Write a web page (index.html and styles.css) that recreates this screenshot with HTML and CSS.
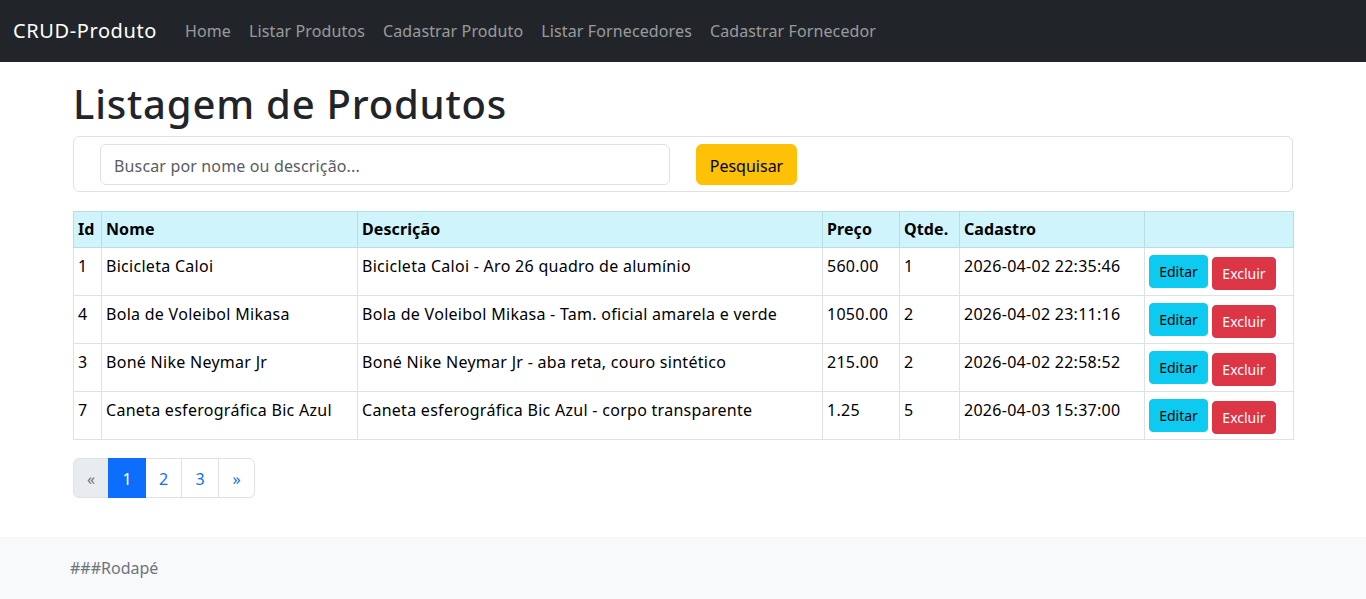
FILE: index.html
```html
<!DOCTYPE html>
<html lang="pt-br">
<head>
<meta charset="utf-8">
<title>CRUD-Produto</title>
<link rel="stylesheet" href="styles.css">
</head>
<body>
<nav class="navbar">
  <a class="brand" href="#">CRUD-Produto</a>
  <ul class="nav">
    <li><a href="#">Home</a></li>
    <li><a href="#">Listar Produtos</a></li>
    <li><a href="#">Cadastrar Produto</a></li>
    <li><a href="#">Listar Fornecedores</a></li>
    <li><a href="#">Cadastrar Fornecedor</a></li>
  </ul>
</nav>
<main class="container">
  <h1 class="title">Listagem de Produtos</h1>
  <form class="search-card">
    <input class="search-input" type="text" placeholder="Buscar por nome ou descrição...">
    <button class="btn btn-warning" type="button">Pesquisar</button>
  </form>
  <table class="table">
    <colgroup>
      <col class="c-id"><col class="c-nome"><col class="c-desc"><col class="c-preco"><col class="c-qtde"><col class="c-cad"><col class="c-acoes">
    </colgroup>
    <thead>
      <tr><th>Id</th><th>Nome</th><th>Descrição</th><th>Preço</th><th>Qtde.</th><th>Cadastro</th><th></th></tr>
    </thead>
    <tbody>
      <tr><td>1</td><td>Bicicleta Caloi</td><td>Bicicleta Caloi - Aro 26 quadro de alumínio</td><td>560.00</td><td>1</td><td>2026-04-02 22:35:46</td><td class="acoes"><a class="btn-sm btn-info" href="#">Editar</a><button class="btn-sm btn-danger" type="button">Excluir</button></td></tr>
      <tr><td>4</td><td>Bola de Voleibol Mikasa</td><td>Bola de Voleibol Mikasa - Tam. oficial amarela e verde</td><td>1050.00</td><td>2</td><td>2026-04-02 23:11:16</td><td class="acoes"><a class="btn-sm btn-info" href="#">Editar</a><button class="btn-sm btn-danger" type="button">Excluir</button></td></tr>
      <tr><td>3</td><td>Boné Nike Neymar Jr</td><td>Boné Nike Neymar Jr - aba reta, couro sintético</td><td>215.00</td><td>2</td><td>2026-04-02 22:58:52</td><td class="acoes"><a class="btn-sm btn-info" href="#">Editar</a><button class="btn-sm btn-danger" type="button">Excluir</button></td></tr>
      <tr><td>7</td><td>Caneta esferográfica Bic Azul</td><td>Caneta esferográfica Bic Azul - corpo transparente</td><td>1.25</td><td>5</td><td>2026-04-03 15:37:00</td><td class="acoes"><a class="btn-sm btn-info" href="#">Editar</a><button class="btn-sm btn-danger" type="button">Excluir</button></td></tr>
    </tbody>
  </table>
  <ul class="pagination">
    <li class="page-item disabled"><span>«</span></li>
    <li class="page-item active"><span>1</span></li>
    <li class="page-item"><a href="#">2</a></li>
    <li class="page-item"><a href="#">3</a></li>
    <li class="page-item"><a href="#">»</a></li>
  </ul>
</main>
<footer class="footer">###Rodapé</footer>
</body>
</html>
```
FILE: styles.css
```css
* { box-sizing: border-box; }
html, body { margin: 0; padding: 0; }
body {
  font-family: "Noto Sans", "Open Sans", sans-serif;
  font-size: 16px;
  line-height: 1.5;
  color: #212529;
  background: #fff;
}
a { text-decoration: none; }

.navbar {
  height: 62px;
  background: #212529;
  display: flex;
  align-items: center;
  padding: 0 13px;
}
.brand {
  color: #fff;
  font-size: 20px;
  letter-spacing: 0.6px;
  margin-right: 19px;
  padding-bottom: 1px;
}
.nav {
  list-style: none;
  margin: 0;
  padding: 0;
  display: flex;
}
.nav a {
  display: block;
  padding: 8px 9px;
  letter-spacing: 0.12px;
  color: rgba(255, 255, 255, 0.55);
}

.container {
  width: 1220px;
  margin: 0 auto;
}
.title {
  font-size: 40px;
  font-weight: 500;
  line-height: 48px;
  letter-spacing: 0.8px;
  margin: 0;
  padding: 18px 0 8px;
}

.search-card {
  height: 56px;
  border: 1px solid #dee2e6;
  border-radius: 6px;
  display: flex;
  align-items: center;
  padding: 0 0 0 26px;
  gap: 26px;
  margin: 0 0 19px;
}
.search-input {
  width: 570px;
  height: 41px;
  border: 1px solid #dee2e6;
  border-radius: 6px;
  padding: 3px 13px 0;
  font: inherit;
  letter-spacing: 0.15px;
  color: #212529;
}
.search-input::placeholder { color: #595c5f; }
.btn {
  font: inherit;
  border: 1px solid transparent;
  border-radius: 6px;
  height: 41px;
  width: 101px;
  padding: 3px 0 0;
  text-align: center;
}
.btn-warning { background: #ffc107; border-color: #ffc107; color: #000; }

.table {
  width: 1220px;
  table-layout: fixed;
  border-collapse: collapse;
  margin: 0 0 18px;
}
.c-id { width: 28px; }
.c-nome { width: 256px; }
.c-desc { width: 465px; }
.c-preco { width: 77px; }
.c-qtde { width: 60px; }
.c-cad { width: 185px; }
.c-acoes { width: 149px; }
.table th, .table td {
  border: 1px solid #dee2e6;
  padding: 4px;
  text-align: left;
  vertical-align: top;
  white-space: nowrap;
  overflow: hidden;
}
.table thead th {
  background: #cff4fc;
  border-color: #badce3;
  font-weight: 700;
  color: #000;
  height: 36px;
  padding-top: 5px;
  letter-spacing: 0.1px;
}
.table tbody td {
  height: 48px;
  color: #000;
  padding-top: 6px;
  letter-spacing: 0.28px;
}
.table td.acoes { padding-top: 7px; letter-spacing: 0; }
.btn-sm {
  display: inline-block;
  font: inherit;
  font-size: 14px;
  line-height: 21px;
  height: 33px;
  padding: 5px 0 0;
  border: 1px solid transparent;
  border-radius: 4px;
  vertical-align: top;
  text-align: center;
}
.btn-info { background: #0dcaf0; border-color: #0dcaf0; color: #000; width: 59px; }
.btn-danger { background: #dc3545; border-color: #dc3545; color: #fff; width: 64px; margin-left: 4px; margin-top: 2px; padding: 0; }

.pagination {
  list-style: none;
  margin: 0;
  padding: 0;
  display: flex;
  height: 40px;
}
.page-item > * {
  display: block;
  height: 40px;
  line-height: 24px;
  padding: 8px 0 6px;
  text-align: center;
  border: 1px solid #dee2e6;
  margin-left: -1px;
  color: #0d6efd;
  background: #fff;
}
.page-item:nth-child(1) > * { width: 36px; margin-left: 0; border-radius: 6px 0 0 6px; }
.page-item:nth-child(2) > * { width: 38px; }
.page-item:nth-child(3) > * { width: 37px; }
.page-item:nth-child(4) > * { width: 38px; }
.page-item:nth-child(5) > * { width: 37px; border-radius: 0 6px 6px 0; }
.page-item.disabled > * { background: #e9ecef; color: #6c757d; }
.page-item.active > * { background: #0d6efd; border-color: #0d6efd; color: #fff; position: relative; z-index: 1; }

.footer {
  margin-top: 39px;
  background: #f8f9fa;
  height: 70px;
  padding: 19px 70px;
  color: #6c757d;
}
```
